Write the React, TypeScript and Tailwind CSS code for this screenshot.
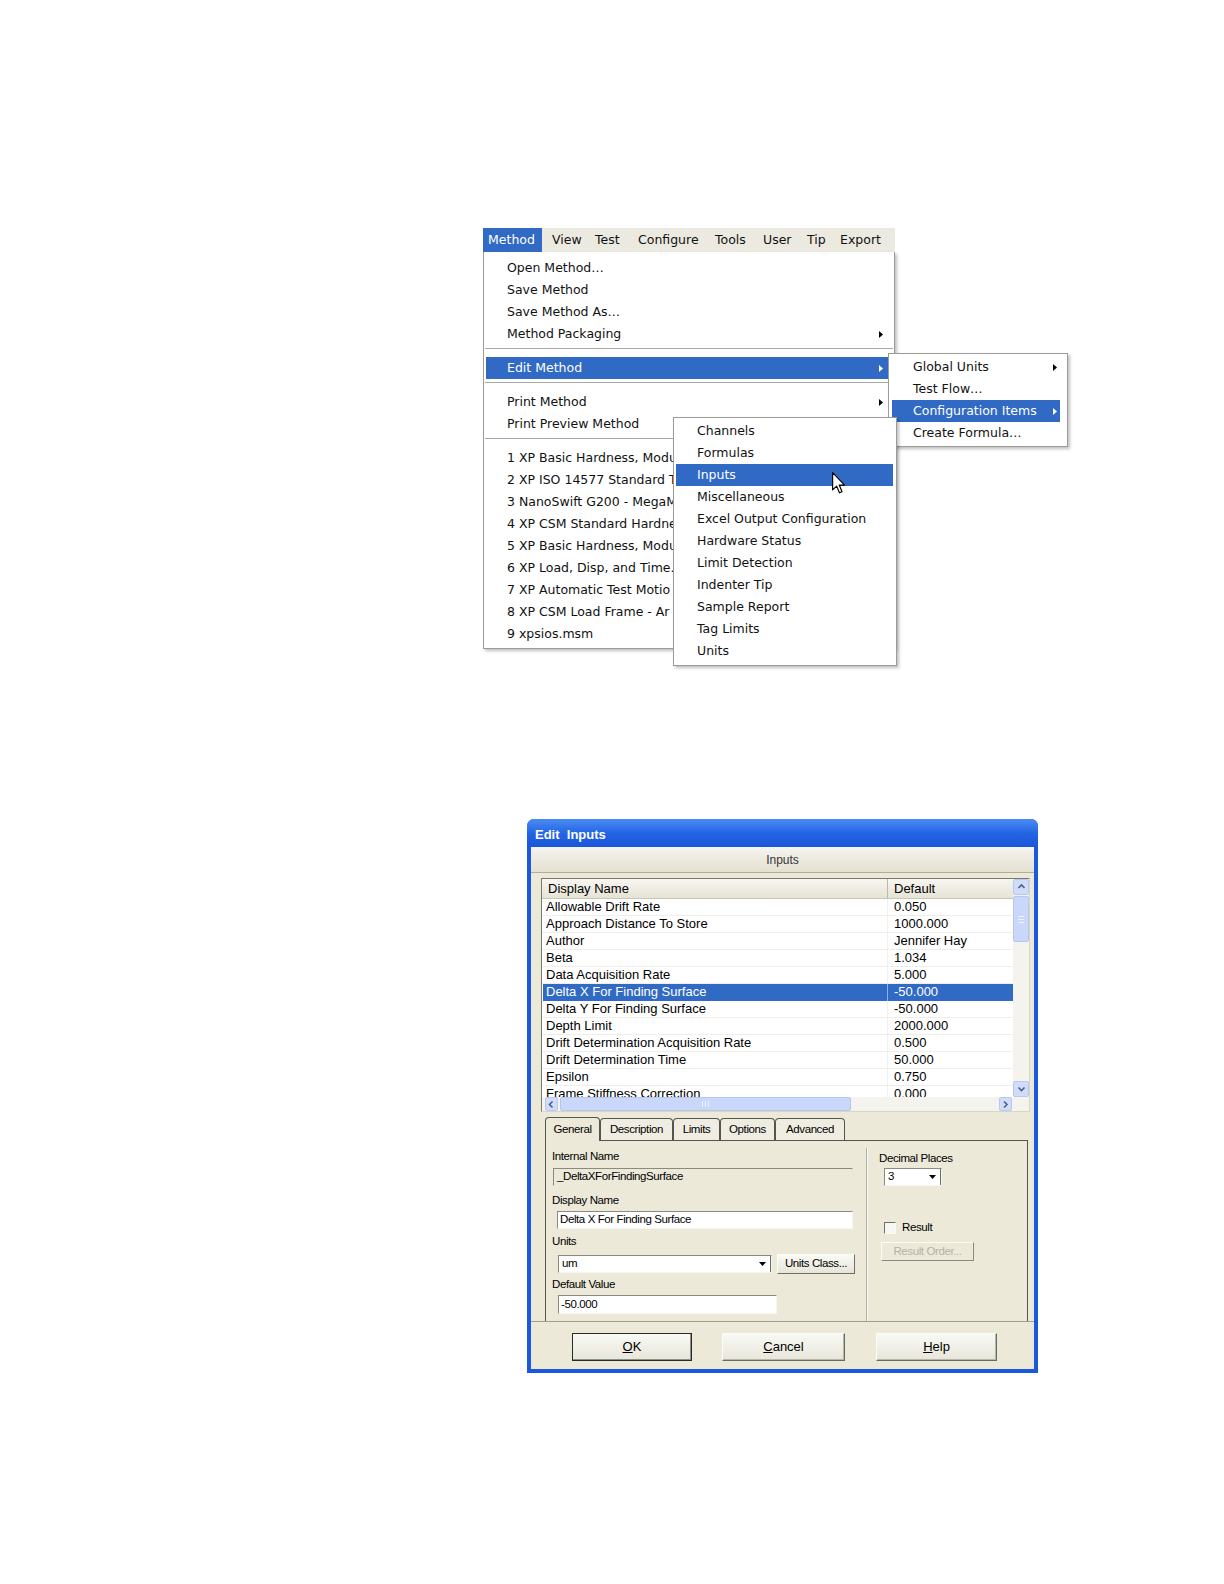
import React from 'react';

const MENU_FONT = "font-['DejaVu_Sans',sans-serif]";
const DLG_FONT = "font-['Liberation_Sans',Arial,sans-serif]";
const NARROW_FONT = "font-['Liberation_Sans',Arial,sans-serif] tracking-[-0.4px]";

// small black/white triangle for submenus
function SubArrow({ white = false }: { white?: boolean }) {
  return (
    <svg width="4" height="7" viewBox="0 0 4 7" className="shrink-0">
      <path d="M0 0 L4 3.5 L0 7 Z" fill={white ? '#ffffff' : '#000000'} />
    </svg>
  );
}

function DownTri() {
  return (
    <svg width="7" height="4" viewBox="0 0 7 4">
      <path d="M0 0 L7 0 L3.5 4 Z" fill="#000000" />
    </svg>
  );
}

type RowProps = { label: string; arrow?: boolean; active?: boolean; className?: string; clip?: boolean };

function MenuRow({ label, arrow, active, className = '', clip = false }: RowProps) {
  return (
    <div
      className={`flex h-[22px] items-center whitespace-nowrap ${
        active ? 'bg-[#316ac5] text-white' : 'text-[#111111]'
      } ${className}`}
    >
      {clip ? (
        <span className="w-[166px] overflow-hidden">{label}</span>
      ) : (
        <span className="flex-1">{label}</span>
      )}
      {arrow && <SubArrow white={active} />}
    </div>
  );
}

function Separator() {
  return (
    <div className="h-[12px] pt-[3px]">
      <div className="mx-[1px] h-px bg-[#a8a8a0]" />
    </div>
  );
}

const menubar = [
  { label: 'Method', cls: 'w-[59px] pl-[5px] bg-[#316ac5] text-white' },
  { label: 'View', cls: 'w-[45px] pl-[10px]' },
  { label: 'Test', cls: 'w-[43px] pl-[8px]' },
  { label: 'Configure', cls: 'w-[76px] pl-[8px]' },
  { label: 'Tools', cls: 'w-[49px] pl-[9px]' },
  { label: 'User', cls: 'w-[44px] pl-[8px]' },
  { label: 'Tip', cls: 'w-[33px] pl-[8px]' },
  { label: 'Export', cls: 'flex-1 pl-[8px]' },
];

// recent files, as far as they show from under the submenu
const recent = [
  '1 XP Basic Hardness, Modu',
  '2 XP ISO 14577 Standard T',
  '3 NanoSwift G200 - MegaM',
  '4 XP CSM Standard Hardne',
  '5 XP Basic Hardness, Modu',
  '6 XP Load, Disp, and Time.',
  '7 XP Automatic Test Motio',
  '8 XP CSM Load Frame - Ar',
  '9 xpsios.msm',
];

const configItems = [
  'Channels',
  'Formulas',
  'Inputs',
  'Miscellaneous',
  'Excel Output Configuration',
  'Hardware Status',
  'Limit Detection',
  'Indenter Tip',
  'Sample Report',
  'Tag Limits',
  'Units',
];

const inputs = [
  ['Allowable Drift Rate', '0.050'],
  ['Approach Distance To Store', '1000.000'],
  ['Author', 'Jennifer Hay'],
  ['Beta', '1.034'],
  ['Data Acquisition Rate', '5.000'],
  ['Delta X For Finding Surface', '-50.000'],
  ['Delta Y For Finding Surface', '-50.000'],
  ['Depth Limit', '2000.000'],
  ['Drift Determination Acquisition Rate', '0.500'],
  ['Drift Determination Time', '50.000'],
  ['Epsilon', '0.750'],
  ['Frame Stiffness Correction', '0.000'],
];

const tabs = [
  { label: 'General', cls: 'w-[55px]' },
  { label: 'Description', cls: 'w-[73px]' },
  { label: 'Limits', cls: 'w-[47px]' },
  { label: 'Options', cls: 'w-[55px]' },
  { label: 'Advanced', cls: 'w-[70px]' },
];

function Cursor() {
  return (
    <svg width="14" height="22" viewBox="0 0 12 19" className="absolute left-[349px] top-[244px]">
      <path
        d="M0.5 0.5 L0.5 15.5 L4 12.2 L6.4 18 L8.6 17 L6.2 11.3 L10.8 11.3 Z"
        fill="#ffffff"
        stroke="#000000"
        strokeWidth="1"
        strokeLinejoin="round"
      />
    </svg>
  );
}

function Menus() {
  return (
    <div className={`relative ml-[483px] h-[440px] w-[586px] text-[12.5px] ${MENU_FONT}`}>
      {/* menu bar */}
      <div className="flex h-[24px] w-[412px] bg-[#eceae0] text-[#111111]">
        {menubar.map((m) => (
          <div key={m.label} className={`flex h-full items-center ${m.cls}`}>
            {m.label}
          </div>
        ))}
      </div>

      {/* Method dropdown */}
      <div className="w-[412px] overflow-hidden border-x border-b border-[#9c9c94] bg-white pt-[5px] pb-[3px] shadow-[2px_2px_3px_rgba(0,0,0,0.25)]">
        {['Open Method…', 'Save Method', 'Save Method As…'].map((l) => (
          <MenuRow key={l} label={l} className="mx-[2px] pl-[21px] pr-[9px]" />
        ))}
        <MenuRow label="Method Packaging" arrow className="mx-[2px] pl-[21px] pr-[9px]" />
        <Separator />
        <MenuRow label="Edit Method" arrow active className="mx-[2px] pl-[21px] pr-[9px]" />
        <Separator />
        <MenuRow label="Print Method" arrow className="mx-[2px] pl-[21px] pr-[9px]" />
        <MenuRow label="Print Preview Method" className="mx-[2px] pl-[21px] pr-[9px]" />
        <Separator />
        {recent.map((l) => (
          <MenuRow key={l} label={l} clip className="mx-[2px] pl-[21px] pr-[9px]" />
        ))}
      </div>

      {/* Edit Method submenu */}
      <div className="absolute left-[405px] top-[125px] w-[180px] border border-[#9c9c94] bg-white py-[2px] shadow-[2px_2px_3px_rgba(0,0,0,0.25)]">
        <MenuRow label="Global Units" arrow className="ml-[3px] mr-[7px] pl-[21px] pr-[3px]" />
        <MenuRow label="Test Flow…" className="ml-[3px] mr-[7px] pl-[21px] pr-[3px]" />
        <MenuRow label="Configuration Items" arrow active className="ml-[3px] mr-[7px] pl-[21px] pr-[3px]" />
        <MenuRow label="Create Formula…" className="ml-[3px] mr-[7px] pl-[21px] pr-[3px]" />
      </div>

      {/* Configuration Items submenu */}
      <div className="absolute left-[190px] top-[189px] w-[224px] border border-[#9c9c94] bg-white pt-[2px] pb-[3px] shadow-[2px_2px_3px_rgba(0,0,0,0.25)]">
        {configItems.map((l) => (
          <MenuRow key={l} label={l} active={l === 'Inputs'} className="ml-[2px] mr-[3px] pl-[21px]" />
        ))}
      </div>

      <Cursor />
    </div>
  );
}

function ScrollBtn({ dir, className = '' }: { dir: 'up' | 'down' | 'left' | 'right'; className?: string }) {
  const paths = {
    up: 'M1.5 5 L4.5 2 L7.5 5',
    down: 'M1.5 2.5 L4.5 5.5 L7.5 2.5',
    left: 'M5.5 1.5 L2.5 4.5 L5.5 7.5',
    right: 'M3 1.5 L6 4.5 L3 7.5',
  };
  return (
    <div className={`flex items-center justify-center rounded-[2px] border border-[#b9c9ee] bg-[#cfdcfb] ${className}`}>
      <svg width="9" height="9" viewBox="0 0 9 9">
        <path d={paths[dir]} fill="none" stroke="#4d6185" strokeWidth="1.6" />
      </svg>
    </div>
  );
}

function InputsList() {
  return (
    <div className="ml-[10px] mt-[5px] flex h-[234px] w-[489px] flex-col border border-t-[#7a7a72] border-l-[#7a7a72] border-r-[#d8d6c8] border-b-[#d8d6c8] bg-white">
      <div className="flex h-[218px]">
        <div className="w-[471px] overflow-hidden text-[13px] text-black">
          <div className="flex h-[20px] border-b border-[#c9c6b6] bg-gradient-to-b from-[#f7f6f0] to-[#e6e3d6] leading-[19px]">
            <div className="w-[346px] border-r border-[#bdb9a8] pl-[6px]">Display Name</div>
            <div className="flex-1 pl-[6px]">Default</div>
          </div>
          {inputs.map(([name, val]) => {
            const sel = name === 'Delta X For Finding Surface';
            return (
              <div
                key={name}
                className={`flex h-[17px] leading-[16px] whitespace-nowrap ${
                  sel ? 'ml-[1px] bg-[#316ac5] text-white' : 'border-b border-[#efeee8]'
                }`}
              >
                <div className={`${sel ? 'w-[345px] pl-[3px]' : 'w-[346px] pl-[4px]'} border-r ${sel ? 'border-[#8fb0e6]' : 'border-[#f1f0ea]'}`}>
                  {name}
                </div>
                <div className="flex-1 pl-[6px]">{val}</div>
              </div>
            );
          })}
        </div>
        {/* vertical scroll */}
        <div className="flex w-[16px] flex-col bg-[#f4f3ee]">
          <ScrollBtn dir="up" className="h-[16px]" />
          <div className="mt-[1px] flex h-[46px] flex-col items-center justify-center gap-[2px] rounded-[2px] border border-[#b6c7ee] bg-[#c9d7fa]">
            <div className="h-px w-[6px] bg-[#eef3ff]" />
            <div className="h-px w-[6px] bg-[#eef3ff]" />
            <div className="h-px w-[6px] bg-[#eef3ff]" />
          </div>
          <div className="flex-1" />
          <ScrollBtn dir="down" className="h-[16px]" />
        </div>
      </div>
      {/* horizontal scroll */}
      <div className="flex h-[14px]">
        <div className="flex w-[471px] bg-[#f4f3ee] pl-[3px]">
          <ScrollBtn dir="left" className="w-[13px]" />
          <div className="ml-[2px] flex w-[291px] items-center justify-center gap-[2px] rounded-[2px] border border-[#b6c7ee] bg-[#c9d7fa]">
            <div className="h-[6px] w-px bg-[#eef3ff]" />
            <div className="h-[6px] w-px bg-[#eef3ff]" />
            <div className="h-[6px] w-px bg-[#eef3ff]" />
          </div>
          <div className="flex-1" />
          <ScrollBtn dir="right" className="mr-[1px] w-[13px]" />
        </div>
        <div className="flex-1 bg-[#f4f3ee]" />
      </div>
    </div>
  );
}

function Field({ value, className = '', white = true }: { value: string; className?: string; white?: boolean }) {
  return (
    <div
      className={`flex items-center border border-t-[#8a8a82] border-l-[#8a8a82] border-r-[#f6f6f0] border-b-[#f6f6f0] ${
        white ? 'bg-white' : ''
      } ${className}`}
    >
      {value}
    </div>
  );
}

function Combo({ value, className = '' }: { value: string; className?: string }) {
  return (
    <div
      className={`flex items-stretch border border-t-[#8a8a82] border-l-[#8a8a82] border-r-[#f6f6f0] border-b-[#f6f6f0] bg-white ${className}`}
    >
      <div className="flex flex-1 items-center pl-[3px]">{value}</div>
      <div className="flex w-[16px] items-center justify-center border-r border-[#6d6d66]">
        <DownTri />
      </div>
    </div>
  );
}

function GeneralTab() {
  return (
    <div className={`ml-[14px] flex h-[181px] w-[483px] border-x border-t border-[#555550] text-[11.5px] text-black ${NARROW_FONT}`}>
      {/* left column */}
      <div className="flex w-[320px] flex-col pl-[6px] pt-[8px]">
        <div className="h-[14px] leading-[14px]">Internal Name</div>
        <Field
          value="_DeltaXForFindingSurface"
          white={false}
          className="ml-[1px] mt-[5px] h-[18px] w-[300px] pl-[3px] border-r-transparent border-b-transparent"
        />
        <div className="mt-[7px] h-[14px] leading-[14px]">Display Name</div>
        <Field value="Delta X For Finding Surface" className="ml-[5px] mt-[4px] h-[18px] w-[296px] pl-[2px]" />
        <div className="mt-[5px] h-[14px] leading-[14px]">Units</div>
        <div className="mt-[6px] flex h-[20px] items-center">
          <Combo value="um" className="ml-[6px] h-[18px] w-[214px]" />
          <button className="ml-[5px] h-[20px] w-[78px] border border-t-[#fbfbf7] border-l-[#fbfbf7] border-r-[#6f6f68] border-b-[#6f6f68] bg-gradient-to-b from-[#fafaf6] to-[#e7e5d8] text-[11.5px]">
            Units Class...
          </button>
        </div>
        <div className="mt-[3px] h-[14px] leading-[14px]">Default Value</div>
        <Field value="-50.000" className="ml-[6px] mt-[4px] h-[19px] w-[219px] pl-[2px]" />
      </div>
      {/* divider */}
      <div className="mt-[7px] w-[2px] border-l border-r border-l-[#b2b0a2] border-r-[#fbfbf6]" />
      {/* right column */}
      <div className="flex flex-1 flex-col pl-[11px] pt-[10px]">
        <div className="h-[14px] leading-[14px]">Decimal Places</div>
        <Combo value="3" className="ml-[5px] mt-[3px] h-[18px] w-[58px]" />
        <div className="ml-[5px] mt-[36px] flex h-[12px] items-center">
          <div className="h-[12px] w-[12px] border border-t-[#707068] border-l-[#707068] border-r-[#fbfbf6] border-b-[#fbfbf6] bg-[#f7f7f2]" />
          <span className="ml-[6px]">Result</span>
        </div>
        <button className="ml-[2px] mt-[8px] h-[19px] w-[93px] border border-t-[#fbfbf7] border-l-[#fbfbf7] border-r-[#8a8a82] border-b-[#8a8a82] text-[11.5px] text-[#b4b2a6]">
          Result Order...
        </button>
      </div>
    </div>
  );
}

function DlgButton({ children, def = false, className = '' }: { children: React.ReactNode; def?: boolean; className?: string }) {
  return (
    <button
      className={`flex h-[28px] items-center justify-center text-[13px] text-black ${
        def
          ? 'border border-[#2a2a2a] bg-gradient-to-b from-[#f9f9f5] to-[#e8e6da] shadow-[inset_-1px_-1px_0_#8f8f88]'
          : 'border border-t-[#fbfbf7] border-l-[#fbfbf7] border-r-[#6a6a64] border-b-[#6a6a64] bg-gradient-to-b from-[#f9f9f5] to-[#e8e6da] shadow-[inset_-1px_-1px_0_#b8b6aa]'
      } ${className}`}
    >
      {children}
    </button>
  );
}

function EditInputsDialog() {
  return (
    <div className={`ml-[527px] mt-[151px] w-[511px] overflow-hidden rounded-t-[7px] bg-[#1c58dc] ${DLG_FONT}`}>
      {/* title bar */}
      <div className="flex h-[28px] items-center bg-gradient-to-b from-[#4a8cf4] via-[#2465e4] to-[#1a56d8] pl-[8px] pt-[4px]">
        <span className="whitespace-pre text-[13px] font-bold text-white">Edit  Inputs</span>
      </div>
      {/* body */}
      <div className="mx-[4px] mb-[4px] flex h-[522px] flex-col bg-[#ece9d8]">
        <div className="flex h-[26px] items-center justify-center border-b border-[#b2ae9c] bg-gradient-to-b from-[#f5f4ef] to-[#e4e1d2] text-[12px] text-[#333333]">
          Inputs
        </div>
        <InputsList />
        {/* tabs */}
        <div className={`ml-[14px] mt-[5px] flex h-[23px] items-end text-[11.5px] ${NARROW_FONT}`}>
          {tabs.map((t, i) => (
            <div
              key={t.label}
              className={`flex items-center justify-center rounded-t-[4px] border-x border-t border-[#555550] ${t.cls} ${
                i === 0 ? 'relative z-10 -mb-px h-[24px] bg-[#ece9d8]' : 'h-[22px] bg-[#efede2]'
              }`}
            >
              {t.label}
            </div>
          ))}
        </div>
        <GeneralTab />
        <div className="h-px bg-[#a09e90]" />
        {/* buttons */}
        <div className="mt-[11px] flex">
          <DlgButton def className="ml-[41px] w-[120px]">
            <span>
              <span className="underline">O</span>K
            </span>
          </DlgButton>
          <DlgButton className="ml-[30px] w-[123px]">
            <span>
              <span className="underline">C</span>ancel
            </span>
          </DlgButton>
          <DlgButton className="ml-[31px] w-[121px]">
            <span>
              <span className="underline">H</span>elp
            </span>
          </DlgButton>
        </div>
      </div>
    </div>
  );
}

export default function App() {
  return (
    <div className="min-h-[1584px] w-[1224px] bg-white pt-[228px]">
      <Menus />
      <EditInputsDialog />
    </div>
  );
}
